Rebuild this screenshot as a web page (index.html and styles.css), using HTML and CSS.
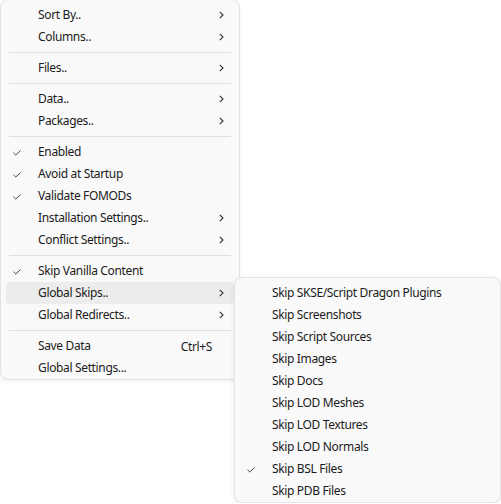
FILE: index.html
```html
<!DOCTYPE html>
<html>
<head>
<meta charset="utf-8">
<link rel="stylesheet" href="styles.css">
</head>
<body>
<div class="stage">
  <div class="menu main">
    <div class="item"><span class="chk"></span><span class="label">Sort By..</span><span class="arrow"><svg width="5" height="8" viewBox="0 0 5 8"><path d="M0.8 0.8 L4 4 L0.8 7.2" fill="none" stroke="#333" stroke-width="1.1"/></svg></span></div>
    <div class="item"><span class="chk"></span><span class="label">Columns..</span><span class="arrow"><svg width="5" height="8" viewBox="0 0 5 8"><path d="M0.8 0.8 L4 4 L0.8 7.2" fill="none" stroke="#333" stroke-width="1.1"/></svg></span></div>
    <div class="sep"></div>
    <div class="item"><span class="chk"></span><span class="label">Files..</span><span class="arrow"><svg width="5" height="8" viewBox="0 0 5 8"><path d="M0.8 0.8 L4 4 L0.8 7.2" fill="none" stroke="#333" stroke-width="1.1"/></svg></span></div>
    <div class="sep"></div>
    <div class="item"><span class="chk"></span><span class="label">Data..</span><span class="arrow"><svg width="5" height="8" viewBox="0 0 5 8"><path d="M0.8 0.8 L4 4 L0.8 7.2" fill="none" stroke="#333" stroke-width="1.1"/></svg></span></div>
    <div class="item"><span class="chk"></span><span class="label">Packages..</span><span class="arrow"><svg width="5" height="8" viewBox="0 0 5 8"><path d="M0.8 0.8 L4 4 L0.8 7.2" fill="none" stroke="#333" stroke-width="1.1"/></svg></span></div>
    <div class="sep"></div>
    <div class="item"><span class="chk"><svg width="8" height="6" viewBox="0 0 8 6"><path d="M0.5 2.8 L2.8 5 L7.5 0.6" fill="none" stroke="#444" stroke-width="1"/></svg></span><span class="label">Enabled</span></div>
    <div class="item"><span class="chk"><svg width="8" height="6" viewBox="0 0 8 6"><path d="M0.5 2.8 L2.8 5 L7.5 0.6" fill="none" stroke="#444" stroke-width="1"/></svg></span><span class="label">Avoid at Startup</span></div>
    <div class="item"><span class="chk"><svg width="8" height="6" viewBox="0 0 8 6"><path d="M0.5 2.8 L2.8 5 L7.5 0.6" fill="none" stroke="#444" stroke-width="1"/></svg></span><span class="label">Validate FOMODs</span></div>
    <div class="item"><span class="chk"></span><span class="label">Installation Settings..</span><span class="arrow"><svg width="5" height="8" viewBox="0 0 5 8"><path d="M0.8 0.8 L4 4 L0.8 7.2" fill="none" stroke="#333" stroke-width="1.1"/></svg></span></div>
    <div class="item"><span class="chk"></span><span class="label">Conflict Settings..</span><span class="arrow"><svg width="5" height="8" viewBox="0 0 5 8"><path d="M0.8 0.8 L4 4 L0.8 7.2" fill="none" stroke="#333" stroke-width="1.1"/></svg></span></div>
    <div class="sep"></div>
    <div class="item"><span class="chk"><svg width="8" height="6" viewBox="0 0 8 6"><path d="M0.5 2.8 L2.8 5 L7.5 0.6" fill="none" stroke="#444" stroke-width="1"/></svg></span><span class="label">Skip Vanilla Content</span></div>
    <div class="item hover"><span class="chk"></span><span class="label">Global Skips..</span><span class="arrow"><svg width="5" height="8" viewBox="0 0 5 8"><path d="M0.8 0.8 L4 4 L0.8 7.2" fill="none" stroke="#333" stroke-width="1.1"/></svg></span></div>
    <div class="item"><span class="chk"></span><span class="label">Global Redirects..</span><span class="arrow"><svg width="5" height="8" viewBox="0 0 5 8"><path d="M0.8 0.8 L4 4 L0.8 7.2" fill="none" stroke="#333" stroke-width="1.1"/></svg></span></div>
    <div class="sep"></div>
    <div class="item"><span class="chk"></span><span class="label">Save Data</span><span class="shortcut">Ctrl+S</span><span class="arrow"></span></div>
    <div class="item"><span class="chk"></span><span class="label">Global Settings...</span></div>
  </div>
  <div class="menu sub">
    <div class="item"><span class="chk"></span><span class="label">Skip SKSE/Script Dragon Plugins</span></div>
    <div class="item"><span class="chk"></span><span class="label">Skip Screenshots</span></div>
    <div class="item"><span class="chk"></span><span class="label">Skip Script Sources</span></div>
    <div class="item"><span class="chk"></span><span class="label">Skip Images</span></div>
    <div class="item"><span class="chk"></span><span class="label">Skip Docs</span></div>
    <div class="item"><span class="chk"></span><span class="label">Skip LOD Meshes</span></div>
    <div class="item"><span class="chk"></span><span class="label">Skip LOD Textures</span></div>
    <div class="item"><span class="chk"></span><span class="label">Skip LOD Normals</span></div>
    <div class="item"><span class="chk"><svg width="8" height="6" viewBox="0 0 8 6"><path d="M0.5 2.8 L2.8 5 L7.5 0.6" fill="none" stroke="#444" stroke-width="1"/></svg></span><span class="label">Skip BSL Files</span></div>
    <div class="item"><span class="chk"></span><span class="label">Skip PDB Files</span></div>
  </div>
</div>
</body>
</html>
```

FILE: styles.css
```css
html, body {
  margin: 0;
  padding: 0;
  background: #ffffff;
}
body {
  font-family: "Noto Sans", "Open Sans", sans-serif;
  font-size: 12px;
  letter-spacing: -0.35px;
  color: #1b1b1b;
  overflow: hidden;
}
.stage {
  position: relative;
  width: 501px;
  height: 504px;
}
.menu {
  background: #f9f9f9;
  border: 1px solid #e3e3e3;
  border-radius: 8px;
  box-sizing: border-box;
  display: flex;
  flex-direction: column;
}
.main {
  width: 240px;
  margin-top: -1px;
  padding: 4px 0 0;
  box-shadow: 0 2px 4px rgba(0,0,0,0.05);
}
.sub {
  position: absolute;
  left: 234px;
  top: 278px;
  width: 267px;
  height: 226px;
  padding: 4px 0 0;
  box-shadow: 0 2px 6px rgba(0,0,0,0.08);
}
.item {
  display: flex;
  align-items: center;
  height: 22px;
  flex: none;
  margin: 0 5px;
  padding: 0 10px 0 7px;
  border-radius: 4px;
  white-space: nowrap;
}
.item.hover {
  background: #ececec;
}
.chk {
  width: 25px;
  flex: none;
  display: flex;
  align-items: center;
  padding-top: 1px;
}
.label {
  flex: 1;
  line-height: 22px;
}
.shortcut {
  margin-right: 3px;
}
.arrow {
  width: 5px;
  flex: none;
  display: flex;
  align-items: center;
  margin-left: 4px;
}
.sep {
  height: 1px;
  flex: none;
  background: #e0e0e0;
  margin: 4px 8px;
}
```
